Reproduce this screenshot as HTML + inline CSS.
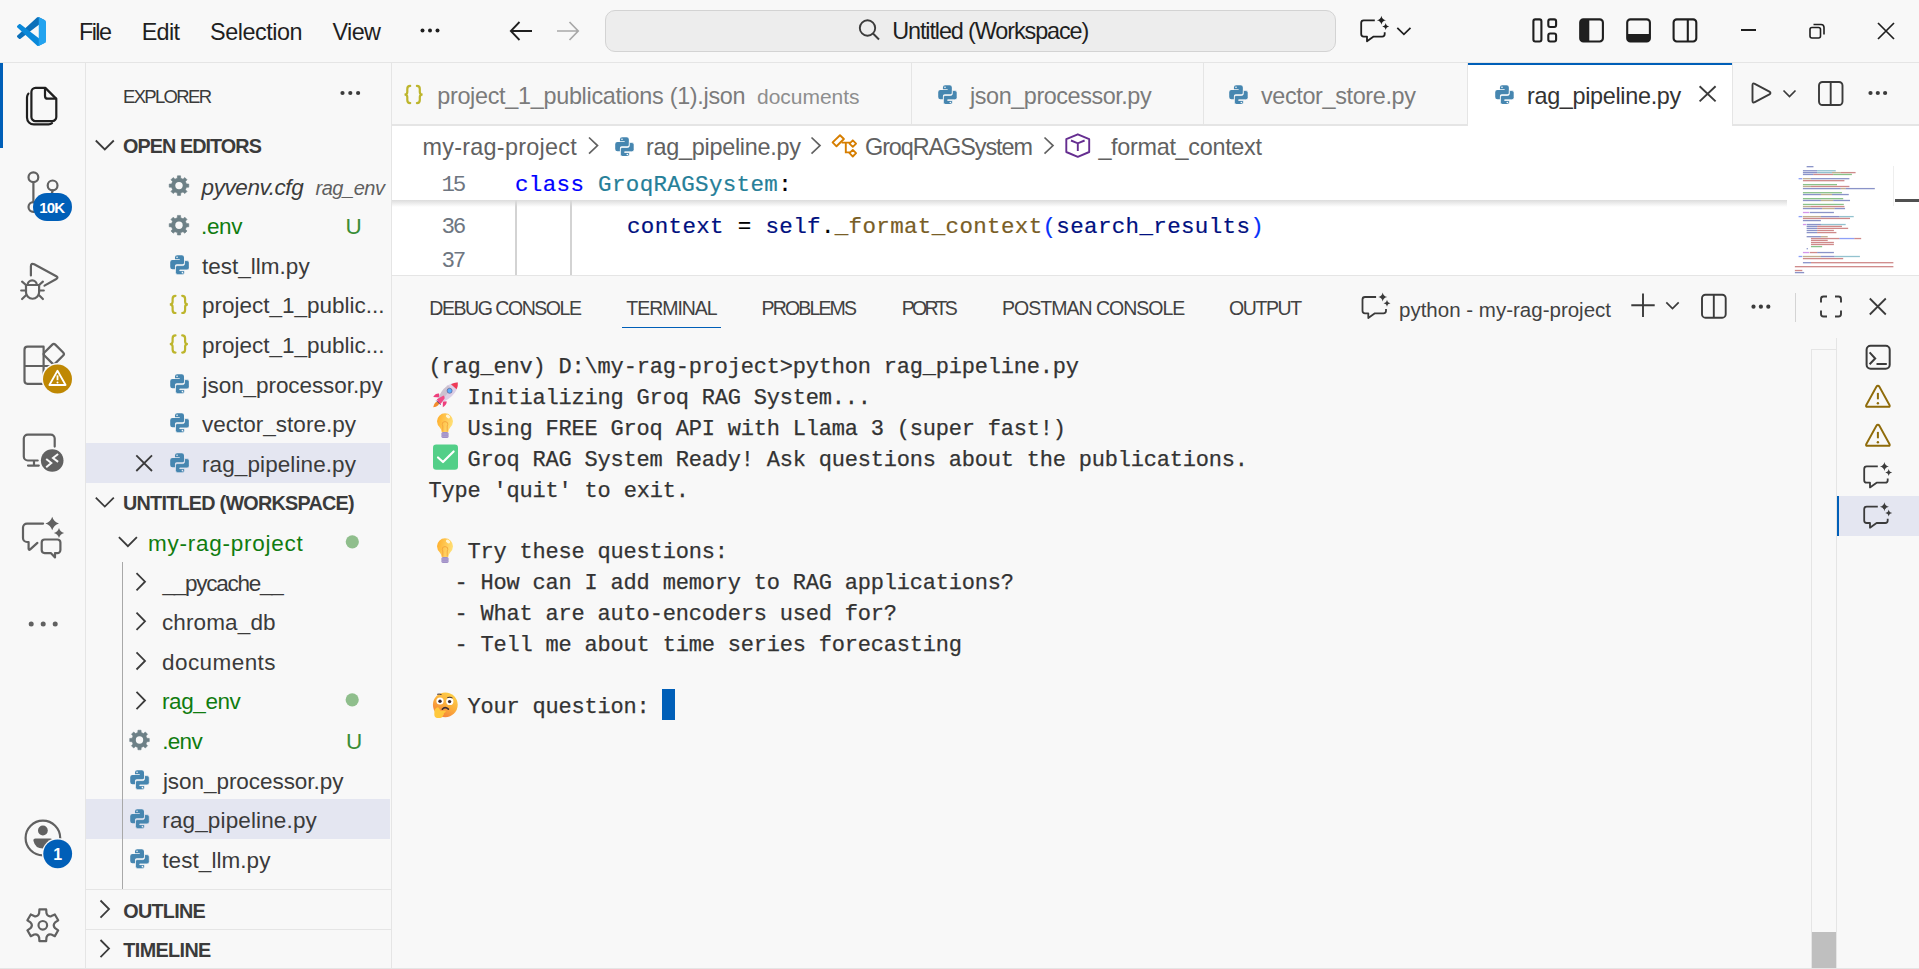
<!DOCTYPE html>
<html><head><meta charset="utf-8"><title>VS Code</title>
<style>
html,body{margin:0;padding:0;width:1919px;height:969px;overflow:hidden;background:#f8f8f8;}
body{position:relative;font-family:"Liberation Sans",sans-serif;}
.t{position:absolute;white-space:nowrap;line-height:1;}
.r{position:absolute;display:block;}
</style></head><body>
<div class="r" style="left:0px;top:0px;width:1919px;height:969px;background:#f8f8f8;"></div><div class="r" style="left:0px;top:62px;width:1919px;height:1px;background:#e5e5e5;"></div><div class="r" style="left:85px;top:63px;width:1px;height:906px;background:#e5e5e5;"></div><div class="r" style="left:391px;top:63px;width:1px;height:906px;background:#e5e5e5;"></div><div class="r" style="left:0px;top:63px;width:3px;height:85px;background:#005fb8;"></div><div class="r" style="left:392px;top:125px;width:1527px;height:150px;background:#ffffff;"></div><div class="r" style="left:392px;top:125px;width:1076px;height:1px;background:#e5e5e5;"></div><div class="r" style="left:1732px;top:125px;width:187px;height:1px;background:#e5e5e5;"></div><div class="r" style="left:392px;top:275px;width:1527px;height:1px;background:#e5e5e5;"></div><div class="r" style="left:0px;top:968px;width:1919px;height:1px;background:#e5e5e5;"></div><svg class="r" style="left:17px;top:17px;" width="29" height="29" viewBox="0 0 100 100"><path fill="#0b6fb9" d="M96.46 10.8L75.86.87C73.48-.28 70.64.2 68.76 2.07L1.34 63.55C-.48 65.2-.48 68.08 1.34 69.74L6.85 74.75C8.34 76.1 10.57 76.2 12.16 74.99L93.42 13.35C96.14 11.28 100 13.22 100 16.64V16.4C100 14 98.63 11.84 96.46 10.8Z"/><path fill="#0a88d9" d="M96.46 89.2L75.86 99.13C73.48 100.28 70.64 99.8 68.76 97.93L1.34 36.45C-.48 34.8-.48 31.92 1.34 30.26L6.85 25.25C8.34 23.9 10.57 23.8 12.16 25.01L93.42 86.65C96.14 88.72 100 86.78 100 83.36V83.6C100 86 98.63 88.16 96.46 89.2Z"/><path fill="#23a3ef" d="M75.86 99.13C73.48 100.28 70.64 99.8 68.76 97.93 71.07 100.24 75 98.6 75 95.34V4.66C75 1.4 71.07-.24 68.76 2.07 70.64.2 73.48-.28 75.86.87L96.46 10.79C98.63 11.83 100 14.02 100 16.43V83.57C100 85.98 98.63 88.17 96.46 89.21Z"/></svg><div class="t" style="left:79.00px;top:21.00px;font-size:23.4px;color:#1f1f1f;letter-spacing:-1.583px;">File</div><div class="t" style="left:141.70px;top:21.00px;font-size:23.4px;color:#1f1f1f;letter-spacing:-0.692px;">Edit</div><div class="t" style="left:210.00px;top:21.00px;font-size:23.4px;color:#1f1f1f;letter-spacing:-0.456px;">Selection</div><div class="t" style="left:332.60px;top:21.00px;font-size:23.4px;color:#1f1f1f;letter-spacing:-0.658px;">View</div><svg class="r" style="left:418px;top:24px;" width="24" height="13" viewBox="0 0 24 13"><circle cx="4.5" cy="6.5" r="2" fill="#1f1f1f"/><circle cx="12" cy="6.5" r="2" fill="#1f1f1f"/><circle cx="19.5" cy="6.5" r="2" fill="#1f1f1f"/></svg><svg class="r" style="left:505px;top:18px;" width="32" height="26" viewBox="0 0 32 26"><path d="M27 13H5.8M14.5 4L5.8 13 14.5 22" fill="none" stroke="#1f1f1f" stroke-width="1.8"/></svg><svg class="r" style="left:552px;top:18px;" width="32" height="26" viewBox="0 0 32 26"><path d="M5 13H26.2M17.5 4L26.2 13 17.5 22" fill="none" stroke="#a8a8a8" stroke-width="1.7"/></svg><div class="r" style="left:605px;top:10px;width:731px;height:42px;background:#ededed;border:1px solid #d3d3d3;border-radius:10px;box-sizing:border-box;"></div><svg class="r" style="left:856px;top:18px;" width="26" height="24" viewBox="0 0 26 24"><circle cx="11.5" cy="10" r="7.7" fill="none" stroke="#3b3b3b" stroke-width="1.9"/><path d="M17 15.5L23 21.5" stroke="#3b3b3b" stroke-width="2"/></svg><div class="t" style="left:892.20px;top:20.00px;font-size:23.4px;color:#1f1f1f;letter-spacing:-1.100px;">Untitled (Workspace)</div><svg class="r" style="left:1357px;top:12px;" width="36" height="34" viewBox="1357 12 36 34"><path d="M1374.8 20.3H1363.7Q1361.2 20.3 1361.2 22.8V34.1Q1361.2 36.6 1363.7 36.6H1367.0V41.3L1373.6000000000001 36.6H1382.2Q1384.7 36.6 1384.7 34.1V32.3" fill="none" stroke="#1f1f1f" stroke-width="1.8" stroke-linejoin="round"/><path d="M1381.4 15.8Q1382.0300000000002 19.67 1385.9 20.3Q1382.0300000000002 20.93 1381.4 24.8Q1380.77 20.93 1376.9 20.3Q1380.77 19.67 1381.4 15.8Z" fill="#1f1f1f"/><path d="M1385.7 23.0Q1386.19 26.01 1389.2 26.5Q1386.19 26.99 1385.7 30.0Q1385.21 26.99 1382.2 26.5Q1385.21 26.01 1385.7 23.0Z" fill="#1f1f1f"/></svg><svg class="r" style="left:1393px;top:24px;" width="20" height="14" viewBox="1393 24 20 14"><path d="M1397.3 27.8L1403.9 34.4 1410.5 27.8" fill="none" stroke="#1f1f1f" stroke-width="1.7"/></svg><svg class="r" style="left:1526px;top:14px;" width="180" height="34" viewBox="1526 14 180 34"><rect x="1533.4" y="19.35" width="8" height="22.1" rx="1.9" fill="none" stroke="#1f1f1f" stroke-width="2.1"/><rect x="1548.3" y="19.35" width="7.8" height="7.6" rx="1.9" fill="none" stroke="#1f1f1f" stroke-width="2.1"/><rect x="1548.3" y="33.5" width="7.8" height="7.95" rx="1.9" fill="none" stroke="#1f1f1f" stroke-width="2.1"/><rect x="1580.2" y="19.35" width="22.7" height="22.1" rx="3.2" fill="none" stroke="#1f1f1f" stroke-width="2.1"/><path d="M1580.2 22.5A3.2 3.2 0 0 1 1583.4 19.35H1589.3V41.45H1583.4A3.2 3.2 0 0 1 1580.2 38.3Z" fill="#1f1f1f"/><rect x="1627.2" y="19.35" width="22.7" height="22.1" rx="3.2" fill="none" stroke="#1f1f1f" stroke-width="2.1"/><path d="M1627.2 34H1649.9V38.3A3.2 3.2 0 0 1 1646.7 41.45H1630.4A3.2 3.2 0 0 1 1627.2 38.3Z" fill="#1f1f1f"/><rect x="1673.6" y="19.35" width="22.7" height="22.1" rx="3.2" fill="none" stroke="#1f1f1f" stroke-width="2.1"/><path d="M1687.8 19.35V41.45" stroke="#1f1f1f" stroke-width="2.1"/></svg><div class="r" style="left:1741px;top:29px;width:15px;height:2px;background:#1f1f1f;"></div><svg class="r" style="left:1806px;top:20px;" width="22" height="22" viewBox="0 0 22 22"><rect x="4" y="7.5" width="10.5" height="10.5" rx="2" fill="none" stroke="#1f1f1f" stroke-width="1.6"/><path d="M7.5 4.5H15A3 3 0 0 1 18 7.5V14.5" fill="none" stroke="#1f1f1f" stroke-width="1.6"/></svg><svg class="r" style="left:1874px;top:19px;" width="24" height="24" viewBox="0 0 24 24"><path d="M4 4L20 20M20 4L4 20" stroke="#1f1f1f" stroke-width="1.7"/></svg><svg class="r" style="left:20px;top:80px;" width="46" height="52" viewBox="20 80 46 52"><path d="M35.6 87.9H45.3L56.3 98.9V116.9A4.2 4.2 0 0 1 52.1 121.1H35.6A4.2 4.2 0 0 1 31.4 116.9V92.1A4.2 4.2 0 0 1 35.6 87.9Z" stroke="#1f1f1f" stroke-width="2.2" fill="none" stroke-linejoin="round" stroke-linecap="round"/><path d="M45 88.2V95.9A2.8 2.8 0 0 0 47.8 98.7H56" stroke="#1f1f1f" stroke-width="2.2" fill="none" stroke-linejoin="round" stroke-linecap="round"/><path d="M28.4 93.6Q27 95.2 27 97.6V117.6A6.8 6.8 0 0 0 33.8 124.4H48.6Q50.6 124.4 52 123.2" stroke="#1f1f1f" stroke-width="2.2" fill="none" stroke-linejoin="round" stroke-linecap="round"/></svg><svg class="r" style="left:20px;top:160px;" width="50" height="60" viewBox="20 160 50 60"><circle cx="33.4" cy="177.3" r="4.9" stroke="#616161" stroke-width="2.2" fill="none" stroke-linejoin="round" stroke-linecap="round"/><circle cx="52.6" cy="185.4" r="4.9" stroke="#616161" stroke-width="2.2" fill="none" stroke-linejoin="round" stroke-linecap="round"/><circle cx="33.4" cy="207" r="4.9" stroke="#616161" stroke-width="2.2" fill="none" stroke-linejoin="round" stroke-linecap="round"/><path d="M33.4 182.2V202.1M52.6 190.3Q52.6 198 38 202.5" stroke="#616161" stroke-width="2.2" fill="none" stroke-linejoin="round" stroke-linecap="round"/></svg><div class="r" style="left:33px;top:192.5px;width:39px;height:28.5px;background:#005fb8;border-radius:14.25px;"></div><div class="t" style="left:39.30px;top:200.00px;font-size:15px;color:#ffffff;letter-spacing:-0.900px;font-weight:700;">10K</div><svg class="r" style="left:15px;top:255px;" width="50" height="50" viewBox="15 255 50 50"><path d="M30.9 275.4V266.3Q31 262.8 34.2 264.3L56.3 276.2Q58.6 277.6 56.3 279L44.5 285.6" stroke="#616161" stroke-width="2.2" fill="none" stroke-linejoin="round" stroke-linecap="round"/><path d="M27.6 285A4.6 4.6 0 0 1 36.8 285" stroke="#616161" stroke-width="2.2" fill="none" stroke-linejoin="round" stroke-linecap="round"/><path d="M26 285H39.1V292.2A6.55 6.55 0 0 1 26 292.2Z" stroke="#616161" stroke-width="2.2" fill="none" stroke-linejoin="round" stroke-linecap="round"/><path d="M22.1 281.7L26 285M21.2 290.5H26M22.1 299L26 295.3M42.9 281.7L39.1 285M43.8 290.5H39.1M42.9 299L39.1 295.3" stroke="#616161" stroke-width="2.2" fill="none" stroke-linejoin="round" stroke-linecap="round"/></svg><svg class="r" style="left:15px;top:338px;" width="60" height="55" viewBox="15 338 60 55"><path d="M43.6 346.7H27.5A3 3 0 0 0 24.5 349.7V380.8A3 3 0 0 0 27.5 383.8H58.6A3 3 0 0 0 61.6 380.8V366H24.5M43.6 346.7V383.8" stroke="#616161" stroke-width="2.2" fill="none" stroke-linejoin="round" stroke-linecap="round"/><path d="M52.3 344.6Q53.8 343.1 55.3 344.6L63.2 352.5Q64.7 354 63.2 355.5L55.3 363.4Q53.8 364.9 52.3 363.4L44.4 355.5Q42.9 354 44.4 352.5Z" stroke="#616161" stroke-width="2.2" fill="none" stroke-linejoin="round" stroke-linecap="round"/></svg><svg class="r" style="left:40px;top:361px;" width="36" height="36" viewBox="40 361 36 36"><circle cx="57.5" cy="379" r="16" fill="#f8f8f8"/><circle cx="57.5" cy="379" r="14.5" fill="#bf8803"/><path d="M57.5 370.8L65.6 385H49.4Z" fill="none" stroke="#ffffff" stroke-width="1.8" stroke-linejoin="round"/><path d="M57.5 375.3V380.2" stroke="#ffffff" stroke-width="1.8"/><circle cx="57.5" cy="382.6" r="1" fill="#fff"/></svg><svg class="r" style="left:15px;top:425px;" width="55" height="50" viewBox="15 425 55 50"><path d="M37.7 460.5H27.8A4 4 0 0 1 23.8 456.5V438.6A4 4 0 0 1 27.8 434.6H50.7A4 4 0 0 1 54.7 438.6V446.6M34 460.5V465.6M28 465.6H38.8" stroke="#616161" stroke-width="2.2" fill="none" stroke-linejoin="round" stroke-linecap="round"/><circle cx="52.2" cy="460.5" r="12.6" fill="#f8f8f8"/><circle cx="52.2" cy="460.5" r="11.3" fill="#616161"/><path d="M46.2 459L51.3 463 46.2 467.3M58.1 454L53 458 58.1 461.9" fill="none" stroke="#f8f8f8" stroke-width="2"/></svg><svg class="r" style="left:15px;top:510px;" width="55" height="55" viewBox="15 510 55 55"><path d="M43.1 523.6H27A4 4 0 0 0 23 527.6V538A4 4 0 0 0 27 542H28.6V548.7Q28.8 550.5 30.2 549.4L37.4 542.9" stroke="#616161" stroke-width="2.2" fill="none" stroke-linejoin="round" stroke-linecap="round"/><path d="M44.7 539.5H57.4A3 3 0 0 1 60.4 542.5V550.1A3 3 0 0 1 57.4 553.1H55V557.5L50.8 553.1H44.7A3 3 0 0 1 41.7 550.1V542.5A3 3 0 0 1 44.7 539.5Z" stroke="#616161" stroke-width="2.2" fill="none" stroke-linejoin="round" stroke-linecap="round"/><path d="M52.2 516.7Q53.696000000000005 522.004 59.0 523.5Q53.696000000000005 524.996 52.2 530.3Q50.704 524.996 45.400000000000006 523.5Q50.704 522.004 52.2 516.7Z" fill="#616161"/><path d="M59 527.9Q60.122 531.878 64.1 533Q60.122 534.122 59 538.1Q57.878 534.122 53.9 533Q57.878 531.878 59 527.9Z" fill="#616161"/></svg><svg class="r" style="left:25px;top:615px;" width="36" height="18" viewBox="25 615 36 18"><circle cx="31.2" cy="624" r="2.5" fill="#616161"/><circle cx="43.2" cy="624" r="2.5" fill="#616161"/><circle cx="55.2" cy="624" r="2.5" fill="#616161"/></svg><svg class="r" style="left:15px;top:812px;" width="60" height="60" viewBox="15 812 60 60"><circle cx="42.9" cy="838" r="17.3" stroke="#616161" stroke-width="2.2" fill="none" stroke-linejoin="round" stroke-linecap="round"/><circle cx="42.9" cy="830.5" r="4.9" fill="#616161"/><path d="M35.5 838.5H50.3Q52.9 838.5 52.3 841Q50.6 848.6 42.9 848.6Q35.2 848.6 33.5 841Q32.9 838.5 35.5 838.5Z" fill="#616161"/><circle cx="57.7" cy="853.8" r="15.8" fill="#f8f8f8"/><circle cx="57.7" cy="853.8" r="14.4" fill="#005fb8"/></svg><div class="t" style="left:53.20px;top:847.00px;font-size:16px;color:#ffffff;font-weight:700;">1</div><svg class="r" style="left:15px;top:898px;" width="56" height="56" viewBox="15 898 56 56"><path d="M39.12 913.25L39.43 909.45L46.17 909.45L46.48 913.25Q47.60 916.99 51.39 916.08L54.84 914.46L58.21 920.29L55.08 922.47Q52.40 925.30 55.08 928.13L58.21 930.31L54.84 936.14L51.39 934.52Q47.60 933.61 46.48 937.35L46.17 941.15L39.43 941.15L39.12 937.35Q38.00 933.61 34.21 934.52L30.76 936.14L27.39 930.31L30.52 928.13Q33.20 925.30 30.52 922.47L27.39 920.29L30.76 914.46L34.21 916.08Q38.00 916.99 39.12 913.25Z" stroke="#616161" stroke-width="2.2" fill="none" stroke-linejoin="round" stroke-linecap="round"/><circle cx="42.8" cy="925.3" r="4.3" stroke="#616161" stroke-width="2.2" fill="none" stroke-linejoin="round" stroke-linecap="round"/></svg><div class="t" style="left:123.00px;top:88.00px;font-size:18.5px;color:#3b3b3b;letter-spacing:-1.679px;">EXPLORER</div><svg class="r" style="left:336px;top:86px;" width="28" height="14" viewBox="336 86 28 14"><circle cx="342.5" cy="93" r="2.1" fill="#3b3b3b"/><circle cx="350.3" cy="93" r="2.1" fill="#3b3b3b"/><circle cx="358.1" cy="93" r="2.1" fill="#3b3b3b"/></svg><svg class="r" style="left:93px;top:138px;" width="24" height="16" viewBox="93 138 24 16"><path d="M95.8 140.5L104.8 149.5L113.8 140.5" fill="none" stroke="#3b3b3b" stroke-width="1.8"/></svg><div class="t" style="left:123.00px;top:137.00px;font-size:19.8px;color:#3b3b3b;letter-spacing:-0.932px;font-weight:700;">OPEN EDITORS</div><svg class="r" style="left:167px;top:173px;" width="24" height="24" viewBox="167 173 24 24"><path d="M177.29 178.19L177.45 175.82L180.55 175.82L180.71 178.19L183.03 179.15L184.82 177.59L187.01 179.78L185.45 181.57L186.41 183.89L188.78 184.05L188.78 187.15L186.41 187.31L185.45 189.63L187.01 191.42L184.82 193.61L183.03 192.05L180.71 193.01L180.55 195.38L177.45 195.38L177.29 193.01L174.97 192.05L173.18 193.61L170.99 191.42L172.55 189.63L171.59 187.31L169.22 187.15L169.22 184.05L171.59 183.89L172.55 181.57L170.99 179.78L173.18 177.59L174.97 179.15Z" fill="#6d8086" stroke="#6d8086" stroke-width="0.6" stroke-linejoin="round"/><circle cx="179" cy="185.60000000000002" r="3.7" fill="#f8f8f8"/></svg><div class="t" style="left:201.62px;top:177.00px;font-size:22.5px;color:#3b3b3b;letter-spacing:-0.422px;font-style:italic;">pyvenv.cfg</div><div class="t" style="left:315.50px;top:178.00px;font-size:20px;color:#5f5f5f;letter-spacing:-0.458px;font-style:italic;">rag_env</div><svg class="r" style="left:167px;top:213px;" width="24" height="24" viewBox="167 213 24 24"><path d="M177.29 217.79L177.45 215.42L180.55 215.42L180.71 217.79L183.03 218.75L184.82 217.19L187.01 219.38L185.45 221.17L186.41 223.49L188.78 223.65L188.78 226.75L186.41 226.91L185.45 229.23L187.01 231.02L184.82 233.21L183.03 231.65L180.71 232.61L180.55 234.98L177.45 234.98L177.29 232.61L174.97 231.65L173.18 233.21L170.99 231.02L172.55 229.23L171.59 226.91L169.22 226.75L169.22 223.65L171.59 223.49L172.55 221.17L170.99 219.38L173.18 217.19L174.97 218.75Z" fill="#6d8086" stroke="#6d8086" stroke-width="0.6" stroke-linejoin="round"/><circle cx="179" cy="225.20000000000002" r="3.7" fill="#f8f8f8"/></svg><div class="t" style="left:201.00px;top:216.00px;font-size:22.5px;color:#107c10;letter-spacing:-0.333px;">.env</div><div class="t" style="left:345.50px;top:216.00px;font-size:22.5px;color:#3a8d36;">U</div><svg class="r" style="left:169.8px;top:255.0px;" width="19.5" height="19.923913043478265" viewBox="-0.2 -0.2 18.8 19.2"><path fill="#4686b0" d="M4.6 2.2Q4.6 0 6.8 0H11.1Q13.3 0 13.3 2.2V7.3Q13.3 8.8 11.8 8.8H6.3Q4.6 8.8 4.6 10.5V13.6H2.2Q0 13.6 0 11.4V6.8Q0 4.6 2.2 4.6H9.2V3.9H4.6Z"/><path fill="#4686b0" stroke="#f8f8f8" stroke-width="0.7" d="M13.8 16.6Q13.8 18.8 11.6 18.8H7.3Q5.1 18.8 5.1 16.6V11.5Q5.1 10 6.6 10H12.1Q13.8 10 13.8 8.3V5.2H16.2Q18.4 5.2 18.4 7.4V12Q18.4 14.2 16.2 14.2H9.2V14.9H13.8Z"/><circle cx="6.6" cy="2" r="0.8" fill="#f8f8f8"/><circle cx="11.8" cy="16.8" r="0.8" fill="#f8f8f8"/></svg><div class="t" style="left:202.00px;top:256.00px;font-size:22.5px;color:#3b3b3b;letter-spacing:0.010px;">test_llm.py</div><svg class="r" style="left:167px;top:292px;" width="26" height="24" viewBox="167 292 26 24"><path d="M175.5 295.8Q172.60000000000002 295.8 172.60000000000002 298.90000000000003V301.8Q172.60000000000002 304.40000000000003 169.8 304.40000000000003Q172.60000000000002 304.40000000000003 172.60000000000002 307.00000000000006V309.90000000000003Q172.60000000000002 313.00000000000006 175.5 313.00000000000006M182.20000000000002 295.8Q185.10000000000002 295.8 185.10000000000002 298.90000000000003V301.8Q185.10000000000002 304.40000000000003 187.9 304.40000000000003Q185.10000000000002 304.40000000000003 185.10000000000002 307.00000000000006V309.90000000000003Q185.10000000000002 313.00000000000006 182.20000000000002 313.00000000000006" fill="none" stroke="#bdb52c" stroke-width="2.2" stroke-linecap="round"/></svg><div class="t" style="left:202.00px;top:295.00px;font-size:22.5px;color:#3b3b3b;letter-spacing:-0.001px;">project_1_public...</div><svg class="r" style="left:167px;top:332px;" width="26" height="24" viewBox="167 332 26 24"><path d="M175.5 335.40000000000003Q172.60000000000002 335.40000000000003 172.60000000000002 338.50000000000006V341.40000000000003Q172.60000000000002 344.00000000000006 169.8 344.00000000000006Q172.60000000000002 344.00000000000006 172.60000000000002 346.6000000000001V349.50000000000006Q172.60000000000002 352.6000000000001 175.5 352.6000000000001M182.20000000000002 335.40000000000003Q185.10000000000002 335.40000000000003 185.10000000000002 338.50000000000006V341.40000000000003Q185.10000000000002 344.00000000000006 187.9 344.00000000000006Q185.10000000000002 344.00000000000006 185.10000000000002 346.6000000000001V349.50000000000006Q185.10000000000002 352.6000000000001 182.20000000000002 352.6000000000001" fill="none" stroke="#bdb52c" stroke-width="2.2" stroke-linecap="round"/></svg><div class="t" style="left:202.00px;top:335.00px;font-size:22.5px;color:#3b3b3b;letter-spacing:-0.001px;">project_1_public...</div><svg class="r" style="left:169.8px;top:373.8px;" width="19.5" height="19.923913043478265" viewBox="-0.2 -0.2 18.8 19.2"><path fill="#4686b0" d="M4.6 2.2Q4.6 0 6.8 0H11.1Q13.3 0 13.3 2.2V7.3Q13.3 8.8 11.8 8.8H6.3Q4.6 8.8 4.6 10.5V13.6H2.2Q0 13.6 0 11.4V6.8Q0 4.6 2.2 4.6H9.2V3.9H4.6Z"/><path fill="#4686b0" stroke="#f8f8f8" stroke-width="0.7" d="M13.8 16.6Q13.8 18.8 11.6 18.8H7.3Q5.1 18.8 5.1 16.6V11.5Q5.1 10 6.6 10H12.1Q13.8 10 13.8 8.3V5.2H16.2Q18.4 5.2 18.4 7.4V12Q18.4 14.2 16.2 14.2H9.2V14.9H13.8Z"/><circle cx="6.6" cy="2" r="0.8" fill="#f8f8f8"/><circle cx="11.8" cy="16.8" r="0.8" fill="#f8f8f8"/></svg><div class="t" style="left:202.62px;top:375.00px;font-size:22.5px;color:#3b3b3b;letter-spacing:-0.075px;">json_processor.py</div><svg class="r" style="left:169.8px;top:413.40000000000003px;" width="19.5" height="19.923913043478265" viewBox="-0.2 -0.2 18.8 19.2"><path fill="#4686b0" d="M4.6 2.2Q4.6 0 6.8 0H11.1Q13.3 0 13.3 2.2V7.3Q13.3 8.8 11.8 8.8H6.3Q4.6 8.8 4.6 10.5V13.6H2.2Q0 13.6 0 11.4V6.8Q0 4.6 2.2 4.6H9.2V3.9H4.6Z"/><path fill="#4686b0" stroke="#f8f8f8" stroke-width="0.7" d="M13.8 16.6Q13.8 18.8 11.6 18.8H7.3Q5.1 18.8 5.1 16.6V11.5Q5.1 10 6.6 10H12.1Q13.8 10 13.8 8.3V5.2H16.2Q18.4 5.2 18.4 7.4V12Q18.4 14.2 16.2 14.2H9.2V14.9H13.8Z"/><circle cx="6.6" cy="2" r="0.8" fill="#f8f8f8"/><circle cx="11.8" cy="16.8" r="0.8" fill="#f8f8f8"/></svg><div class="t" style="left:202.00px;top:414.00px;font-size:22.5px;color:#3b3b3b;letter-spacing:0.009px;">vector_store.py</div><div class="r" style="left:86px;top:443px;width:304px;height:40px;background:#e4e6f1;"></div><svg class="r" style="left:130px;top:450px;" width="28" height="28" viewBox="130 450 28 28"><path d="M136.3 455.3L152 471M152 455.3L136.3 471" stroke="#3b3b3b" stroke-width="1.8"/></svg><svg class="r" style="left:169.8px;top:453.0px;" width="19.5" height="19.923913043478265" viewBox="-0.2 -0.2 18.8 19.2"><path fill="#4686b0" d="M4.6 2.2Q4.6 0 6.8 0H11.1Q13.3 0 13.3 2.2V7.3Q13.3 8.8 11.8 8.8H6.3Q4.6 8.8 4.6 10.5V13.6H2.2Q0 13.6 0 11.4V6.8Q0 4.6 2.2 4.6H9.2V3.9H4.6Z"/><path fill="#4686b0" stroke="#e4e6f1" stroke-width="0.7" d="M13.8 16.6Q13.8 18.8 11.6 18.8H7.3Q5.1 18.8 5.1 16.6V11.5Q5.1 10 6.6 10H12.1Q13.8 10 13.8 8.3V5.2H16.2Q18.4 5.2 18.4 7.4V12Q18.4 14.2 16.2 14.2H9.2V14.9H13.8Z"/><circle cx="6.6" cy="2" r="0.8" fill="#e4e6f1"/><circle cx="11.8" cy="16.8" r="0.8" fill="#e4e6f1"/></svg><div class="t" style="left:202.00px;top:454.00px;font-size:22.5px;color:#3b3b3b;letter-spacing:0.098px;">rag_pipeline.py</div><svg class="r" style="left:93px;top:495px;" width="24" height="16" viewBox="93 495 24 16"><path d="M95.8 497.6L104.8 506.6L113.8 497.6" fill="none" stroke="#3b3b3b" stroke-width="1.8"/></svg><div class="t" style="left:123.00px;top:494.00px;font-size:19.8px;color:#3b3b3b;letter-spacing:-0.747px;font-weight:700;">UNTITLED (WORKSPACE)</div><svg class="r" style="left:116px;top:535px;" width="24" height="16" viewBox="116 535 24 16"><path d="M118.9 537.2L127.9 546.2L136.9 537.2" fill="none" stroke="#3b3b3b" stroke-width="1.8"/></svg><div class="t" style="left:148.00px;top:533.00px;font-size:22.5px;color:#107c10;letter-spacing:0.754px;">my-rag-project</div><svg class="r" style="left:340px;top:530px;" width="24" height="24" viewBox="340 530 24 24"><circle cx="352.3" cy="541.8" r="6.6" fill="#8fbe8c"/></svg><div class="r" style="left:122px;top:562px;width:1px;height:327px;background:#a8a8a8;"></div><svg class="r" style="left:134px;top:571px;" width="16" height="24" viewBox="134 571 16 24"><path d="M136.5 573.0999999999999L145.0 581.6999999999999L136.5 590.3" fill="none" stroke="#3b3b3b" stroke-width="1.8"/></svg><div class="t" style="left:162.38px;top:573.00px;font-size:22.5px;color:#3b3b3b;letter-spacing:-1.242px;">__pycache__</div><svg class="r" style="left:134px;top:610px;" width="16" height="24" viewBox="134 610 16 24"><path d="M136.5 612.7L145.0 621.3000000000001L136.5 629.9000000000001" fill="none" stroke="#3b3b3b" stroke-width="1.8"/></svg><div class="t" style="left:162.00px;top:612.00px;font-size:22.5px;color:#3b3b3b;letter-spacing:0.122px;">chroma_db</div><svg class="r" style="left:134px;top:650px;" width="16" height="24" viewBox="134 650 16 24"><path d="M136.5 652.3L145.0 660.9L136.5 669.5" fill="none" stroke="#3b3b3b" stroke-width="1.8"/></svg><div class="t" style="left:162.00px;top:652.00px;font-size:22.5px;color:#3b3b3b;letter-spacing:0.434px;">documents</div><svg class="r" style="left:134px;top:689px;" width="16" height="24" viewBox="134 689 16 24"><path d="M136.5 691.9000000000001L145.0 700.5000000000001L136.5 709.1000000000001" fill="none" stroke="#3b3b3b" stroke-width="1.8"/></svg><div class="t" style="left:162.00px;top:691.00px;font-size:22.5px;color:#107c10;letter-spacing:-0.408px;">rag_env</div><svg class="r" style="left:340px;top:688px;" width="24" height="24" viewBox="340 688 24 24"><circle cx="352.2" cy="699.8" r="6.6" fill="#8fbe8c"/></svg><svg class="r" style="left:127px;top:728px;" width="24" height="24" viewBox="127 728 24 24"><path d="M137.79 732.59L137.95 730.22L141.05 730.22L141.21 732.59L143.53 733.55L145.32 731.99L147.51 734.18L145.95 735.97L146.91 738.29L149.28 738.45L149.28 741.55L146.91 741.71L145.95 744.03L147.51 745.82L145.32 748.01L143.53 746.45L141.21 747.41L141.05 749.78L137.95 749.78L137.79 747.41L135.47 746.45L133.68 748.01L131.49 745.82L133.05 744.03L132.09 741.71L129.72 741.55L129.72 738.45L132.09 738.29L133.05 735.97L131.49 734.18L133.68 731.99L135.47 733.55Z" fill="#6d8086" stroke="#6d8086" stroke-width="0.6" stroke-linejoin="round"/><circle cx="139.5" cy="740.0" r="3.7" fill="#f8f8f8"/></svg><div class="t" style="left:162.30px;top:731.00px;font-size:22.5px;color:#107c10;letter-spacing:-0.733px;">.env</div><div class="t" style="left:346.00px;top:731.00px;font-size:22.5px;color:#3a8d36;">U</div><svg class="r" style="left:130.2px;top:769.8px;" width="19.5" height="19.923913043478265" viewBox="-0.2 -0.2 18.8 19.2"><path fill="#4686b0" d="M4.6 2.2Q4.6 0 6.8 0H11.1Q13.3 0 13.3 2.2V7.3Q13.3 8.8 11.8 8.8H6.3Q4.6 8.8 4.6 10.5V13.6H2.2Q0 13.6 0 11.4V6.8Q0 4.6 2.2 4.6H9.2V3.9H4.6Z"/><path fill="#4686b0" stroke="#f8f8f8" stroke-width="0.7" d="M13.8 16.6Q13.8 18.8 11.6 18.8H7.3Q5.1 18.8 5.1 16.6V11.5Q5.1 10 6.6 10H12.1Q13.8 10 13.8 8.3V5.2H16.2Q18.4 5.2 18.4 7.4V12Q18.4 14.2 16.2 14.2H9.2V14.9H13.8Z"/><circle cx="6.6" cy="2" r="0.8" fill="#f8f8f8"/><circle cx="11.8" cy="16.8" r="0.8" fill="#f8f8f8"/></svg><div class="t" style="left:162.93px;top:771.00px;font-size:22.5px;color:#3b3b3b;letter-spacing:-0.056px;">json_processor.py</div><div class="r" style="left:86px;top:799px;width:304px;height:40px;background:#e4e6f1;"></div><div class="r" style="left:122px;top:799px;width:1px;height:40px;background:#a8a8a8;"></div><svg class="r" style="left:130.2px;top:809.4000000000001px;" width="19.5" height="19.923913043478265" viewBox="-0.2 -0.2 18.8 19.2"><path fill="#4686b0" d="M4.6 2.2Q4.6 0 6.8 0H11.1Q13.3 0 13.3 2.2V7.3Q13.3 8.8 11.8 8.8H6.3Q4.6 8.8 4.6 10.5V13.6H2.2Q0 13.6 0 11.4V6.8Q0 4.6 2.2 4.6H9.2V3.9H4.6Z"/><path fill="#4686b0" stroke="#e4e6f1" stroke-width="0.7" d="M13.8 16.6Q13.8 18.8 11.6 18.8H7.3Q5.1 18.8 5.1 16.6V11.5Q5.1 10 6.6 10H12.1Q13.8 10 13.8 8.3V5.2H16.2Q18.4 5.2 18.4 7.4V12Q18.4 14.2 16.2 14.2H9.2V14.9H13.8Z"/><circle cx="6.6" cy="2" r="0.8" fill="#e4e6f1"/><circle cx="11.8" cy="16.8" r="0.8" fill="#e4e6f1"/></svg><div class="t" style="left:162.30px;top:810.00px;font-size:22.5px;color:#3b3b3b;letter-spacing:0.134px;">rag_pipeline.py</div><svg class="r" style="left:130.2px;top:849.0px;" width="19.5" height="19.923913043478265" viewBox="-0.2 -0.2 18.8 19.2"><path fill="#4686b0" d="M4.6 2.2Q4.6 0 6.8 0H11.1Q13.3 0 13.3 2.2V7.3Q13.3 8.8 11.8 8.8H6.3Q4.6 8.8 4.6 10.5V13.6H2.2Q0 13.6 0 11.4V6.8Q0 4.6 2.2 4.6H9.2V3.9H4.6Z"/><path fill="#4686b0" stroke="#f8f8f8" stroke-width="0.7" d="M13.8 16.6Q13.8 18.8 11.6 18.8H7.3Q5.1 18.8 5.1 16.6V11.5Q5.1 10 6.6 10H12.1Q13.8 10 13.8 8.3V5.2H16.2Q18.4 5.2 18.4 7.4V12Q18.4 14.2 16.2 14.2H9.2V14.9H13.8Z"/><circle cx="6.6" cy="2" r="0.8" fill="#f8f8f8"/><circle cx="11.8" cy="16.8" r="0.8" fill="#f8f8f8"/></svg><div class="t" style="left:162.30px;top:850.00px;font-size:22.5px;color:#3b3b3b;letter-spacing:0.060px;">test_llm.py</div><svg class="r" style="left:130.2px;top:888.6000000000001px;" width="19.5" height="19.923913043478265" viewBox="-0.2 -0.2 18.8 19.2"><path fill="#4686b0" d="M4.6 2.2Q4.6 0 6.8 0H11.1Q13.3 0 13.3 2.2V7.3Q13.3 8.8 11.8 8.8H6.3Q4.6 8.8 4.6 10.5V13.6H2.2Q0 13.6 0 11.4V6.8Q0 4.6 2.2 4.6H9.2V3.9H4.6Z"/><path fill="#4686b0" stroke="#f8f8f8" stroke-width="0.7" d="M13.8 16.6Q13.8 18.8 11.6 18.8H7.3Q5.1 18.8 5.1 16.6V11.5Q5.1 10 6.6 10H12.1Q13.8 10 13.8 8.3V5.2H16.2Q18.4 5.2 18.4 7.4V12Q18.4 14.2 16.2 14.2H9.2V14.9H13.8Z"/><circle cx="6.6" cy="2" r="0.8" fill="#f8f8f8"/><circle cx="11.8" cy="16.8" r="0.8" fill="#f8f8f8"/></svg><div class="r" style="left:86px;top:889px;width:305px;height:80px;background:#f8f8f8;"></div><div class="r" style="left:86px;top:889px;width:305px;height:1px;background:#e5e5e5;"></div><svg class="r" style="left:98px;top:898px;" width="16" height="24" viewBox="98 898 16 24"><path d="M100.5 900.5L109.0 909.1L100.5 917.7" fill="none" stroke="#3b3b3b" stroke-width="1.8"/></svg><div class="t" style="left:123.30px;top:902.00px;font-size:19.8px;color:#3b3b3b;letter-spacing:-0.729px;font-weight:700;">OUTLINE</div><div class="r" style="left:86px;top:929px;width:305px;height:1px;background:#e5e5e5;"></div><svg class="r" style="left:98px;top:938px;" width="16" height="24" viewBox="98 938 16 24"><path d="M100.5 940L109.0 948.6L100.5 957.2" fill="none" stroke="#3b3b3b" stroke-width="1.8"/></svg><div class="t" style="left:123.30px;top:941.00px;font-size:19.8px;color:#3b3b3b;letter-spacing:-0.625px;font-weight:700;">TIMELINE</div><div class="r" style="left:0px;top:968px;width:1919px;height:1px;background:#e5e5e5;"></div><div class="r" style="left:392px;top:63px;width:1527px;height:62px;background:#f8f8f8;"></div><div class="r" style="left:392px;top:124px;width:1076px;height:2px;background:#e5e5e5;"></div><div class="r" style="left:1732px;top:124px;width:187px;height:2px;background:#e5e5e5;"></div><svg class="r" style="left:402px;top:82px;" width="26" height="24" viewBox="402 82 26 24"><path d="M410.2 85.9Q407.3 85.9 407.3 89.0V91.9Q407.3 94.5 404.5 94.5Q407.3 94.5 407.3 97.1V100.0Q407.3 103.1 410.2 103.1M416.9 85.9Q419.8 85.9 419.8 89.0V91.9Q419.8 94.5 422.6 94.5Q419.8 94.5 419.8 97.1V100.0Q419.8 103.1 416.9 103.1" fill="none" stroke="#bdb52c" stroke-width="2.2" stroke-linecap="round"/></svg><div class="t" style="left:437.20px;top:85.00px;font-size:23.4px;color:#7b7b7b;letter-spacing:-0.296px;">project_1_publications (1).json</div><div class="t" style="left:757.00px;top:86.00px;font-size:21px;color:#8e8e8e;letter-spacing:-0.019px;">documents</div><div class="r" style="left:911px;top:63px;width:1px;height:62px;background:#e5e5e5;"></div><svg class="r" style="left:937.8px;top:84.5px;" width="19.3" height="19.719565217391306" viewBox="-0.2 -0.2 18.8 19.2"><path fill="#4686b0" d="M4.6 2.2Q4.6 0 6.8 0H11.1Q13.3 0 13.3 2.2V7.3Q13.3 8.8 11.8 8.8H6.3Q4.6 8.8 4.6 10.5V13.6H2.2Q0 13.6 0 11.4V6.8Q0 4.6 2.2 4.6H9.2V3.9H4.6Z"/><path fill="#4686b0" stroke="#f8f8f8" stroke-width="0.7" d="M13.8 16.6Q13.8 18.8 11.6 18.8H7.3Q5.1 18.8 5.1 16.6V11.5Q5.1 10 6.6 10H12.1Q13.8 10 13.8 8.3V5.2H16.2Q18.4 5.2 18.4 7.4V12Q18.4 14.2 16.2 14.2H9.2V14.9H13.8Z"/><circle cx="6.6" cy="2" r="0.8" fill="#f8f8f8"/><circle cx="11.8" cy="16.8" r="0.8" fill="#f8f8f8"/></svg><div class="t" style="left:970.12px;top:85.00px;font-size:23.4px;color:#7b7b7b;letter-spacing:-0.441px;">json_processor.py</div><div class="r" style="left:1203px;top:63px;width:1px;height:62px;background:#e5e5e5;"></div><svg class="r" style="left:1229px;top:84.5px;" width="19.3" height="19.719565217391306" viewBox="-0.2 -0.2 18.8 19.2"><path fill="#4686b0" d="M4.6 2.2Q4.6 0 6.8 0H11.1Q13.3 0 13.3 2.2V7.3Q13.3 8.8 11.8 8.8H6.3Q4.6 8.8 4.6 10.5V13.6H2.2Q0 13.6 0 11.4V6.8Q0 4.6 2.2 4.6H9.2V3.9H4.6Z"/><path fill="#4686b0" stroke="#f8f8f8" stroke-width="0.7" d="M13.8 16.6Q13.8 18.8 11.6 18.8H7.3Q5.1 18.8 5.1 16.6V11.5Q5.1 10 6.6 10H12.1Q13.8 10 13.8 8.3V5.2H16.2Q18.4 5.2 18.4 7.4V12Q18.4 14.2 16.2 14.2H9.2V14.9H13.8Z"/><circle cx="6.6" cy="2" r="0.8" fill="#f8f8f8"/><circle cx="11.8" cy="16.8" r="0.8" fill="#f8f8f8"/></svg><div class="t" style="left:1261.00px;top:85.00px;font-size:23.4px;color:#7b7b7b;letter-spacing:-0.357px;">vector_store.py</div><div class="r" style="left:1467px;top:63px;width:1px;height:62px;background:#e5e5e5;"></div><div class="r" style="left:1468px;top:63px;width:264px;height:63px;background:#ffffff;"></div><div class="r" style="left:1468px;top:63px;width:264px;height:2px;background:#005fb8;"></div><div class="r" style="left:1732px;top:63px;width:1px;height:62px;background:#e5e5e5;"></div><svg class="r" style="left:1494.5px;top:84.5px;" width="19.3" height="19.719565217391306" viewBox="-0.2 -0.2 18.8 19.2"><path fill="#4686b0" d="M4.6 2.2Q4.6 0 6.8 0H11.1Q13.3 0 13.3 2.2V7.3Q13.3 8.8 11.8 8.8H6.3Q4.6 8.8 4.6 10.5V13.6H2.2Q0 13.6 0 11.4V6.8Q0 4.6 2.2 4.6H9.2V3.9H4.6Z"/><path fill="#4686b0" stroke="#ffffff" stroke-width="0.7" d="M13.8 16.6Q13.8 18.8 11.6 18.8H7.3Q5.1 18.8 5.1 16.6V11.5Q5.1 10 6.6 10H12.1Q13.8 10 13.8 8.3V5.2H16.2Q18.4 5.2 18.4 7.4V12Q18.4 14.2 16.2 14.2H9.2V14.9H13.8Z"/><circle cx="6.6" cy="2" r="0.8" fill="#ffffff"/><circle cx="11.8" cy="16.8" r="0.8" fill="#ffffff"/></svg><div class="t" style="left:1527.00px;top:85.00px;font-size:23.4px;color:#333333;letter-spacing:-0.318px;">rag_pipeline.py</div><svg class="r" style="left:1694px;top:82px;" width="26" height="24" viewBox="1694 82 26 24"><path d="M1699.6 86.2L1715.6 101.4M1715.6 86.2L1699.6 101.4" stroke="#3b3b3b" stroke-width="1.9"/></svg><svg class="r" style="left:1746px;top:78px;" width="54" height="30" viewBox="1746 78 54 30"><path d="M1752.5 85.2Q1752.5 82.6 1754.8 83.8L1769.4 91.6Q1771.5 93 1769.4 94.4L1754.8 102.2Q1752.5 103.4 1752.5 100.8Z" fill="none" stroke="#3b3b3b" stroke-width="1.9" stroke-linejoin="round"/><path d="M1783.5 90.5L1789.5 96.5 1795.5 90.5" fill="none" stroke="#3b3b3b" stroke-width="1.7"/></svg><svg class="r" style="left:1814px;top:78px;" width="34" height="32" viewBox="1814 78 34 32"><rect x="1819" y="82" width="23.5" height="23" rx="3.5" fill="none" stroke="#3b3b3b" stroke-width="1.9"/><path d="M1830.7 82V105" stroke="#3b3b3b" stroke-width="1.9"/></svg><svg class="r" style="left:1864px;top:86px;" width="28" height="14" viewBox="1864 86 28 14"><circle cx="1870.5" cy="93" r="2.1" fill="#3b3b3b"/><circle cx="1877.8" cy="93" r="2.1" fill="#3b3b3b"/><circle cx="1885.1" cy="93" r="2.1" fill="#3b3b3b"/></svg><div class="t" style="left:422.50px;top:136.00px;font-size:23.4px;color:#616161;letter-spacing:0.263px;">my-rag-project</div><svg class="r" style="left:587px;top:134px;" width="16" height="24" viewBox="587 134 16 24"><path d="M589 137.5L597.5 145.6 589 153.7" fill="none" stroke="#616161" stroke-width="1.7"/></svg><svg class="r" style="left:614.5px;top:136.5px;" width="19.3" height="19.719565217391306" viewBox="-0.2 -0.2 18.8 19.2"><path fill="#4686b0" d="M4.6 2.2Q4.6 0 6.8 0H11.1Q13.3 0 13.3 2.2V7.3Q13.3 8.8 11.8 8.8H6.3Q4.6 8.8 4.6 10.5V13.6H2.2Q0 13.6 0 11.4V6.8Q0 4.6 2.2 4.6H9.2V3.9H4.6Z"/><path fill="#4686b0" stroke="#ffffff" stroke-width="0.7" d="M13.8 16.6Q13.8 18.8 11.6 18.8H7.3Q5.1 18.8 5.1 16.6V11.5Q5.1 10 6.6 10H12.1Q13.8 10 13.8 8.3V5.2H16.2Q18.4 5.2 18.4 7.4V12Q18.4 14.2 16.2 14.2H9.2V14.9H13.8Z"/><circle cx="6.6" cy="2" r="0.8" fill="#ffffff"/><circle cx="11.8" cy="16.8" r="0.8" fill="#ffffff"/></svg><div class="t" style="left:646.00px;top:136.00px;font-size:23.4px;color:#616161;letter-spacing:-0.268px;">rag_pipeline.py</div><svg class="r" style="left:809px;top:134px;" width="16" height="24" viewBox="809 134 16 24"><path d="M811.5 137.5L820.0 145.6 811.5 153.7" fill="none" stroke="#616161" stroke-width="1.7"/></svg><svg class="r" style="left:826px;top:128px;" width="36" height="34" viewBox="826 128 36 34"><path d="M832.6 142.4L840 135.2 843.9 139 836.5 146.3Z" fill="none" stroke="#d67e00" stroke-width="1.9" stroke-linejoin="round"/><path d="M841.6 142.6H850M845.8 142.6V152.4H850" fill="none" stroke="#d67e00" stroke-width="1.9"/><path d="M852.8 140.3L856.1 143.6 852.8 146.9 849.5 143.6Z" fill="none" stroke="#d67e00" stroke-width="1.8" stroke-linejoin="round"/><path d="M852.8 149.9L856.1 153.2 852.8 156.5 849.5 153.2Z" fill="none" stroke="#d67e00" stroke-width="1.8" stroke-linejoin="round"/></svg><div class="t" style="left:865.00px;top:136.00px;font-size:23.4px;color:#616161;letter-spacing:-1.062px;">GroqRAGSystem</div><svg class="r" style="left:1042px;top:134px;" width="16" height="24" viewBox="1042 134 16 24"><path d="M1044.5 137.5L1053.0 145.6 1044.5 153.7" fill="none" stroke="#616161" stroke-width="1.7"/></svg><svg class="r" style="left:1062px;top:130px;" width="32" height="32" viewBox="1062 130 32 32"><path d="M1077.8 134.3L1089.2 139.2V152L1077.8 156.8 1066.3 152V139.2Z" fill="none" stroke="#652d90" stroke-width="1.9" stroke-linejoin="round"/><path d="M1071 140.5L1077.8 143.3 1084.6 140.5M1077.8 143.3V151" fill="none" stroke="#652d90" stroke-width="1.9"/></svg><div class="t" style="left:1098.38px;top:136.00px;font-size:23.4px;color:#616161;letter-spacing:-0.295px;">_format_context</div><div class="r" style="left:515px;top:200px;width:2px;height:75px;background:#d3d3d3;"></div><div class="r" style="left:570px;top:200px;width:2px;height:75px;background:#d3d3d3;"></div><div class="t" style="left:441.40px;top:216.00px;font-size:22.5px;color:#6e7681;letter-spacing:-2.200px;font-family:'Liberation Mono',monospace;">36</div><div class="t" style="left:441.40px;top:250.00px;font-size:22.5px;color:#6e7681;letter-spacing:-2.200px;font-family:'Liberation Mono',monospace;">37</div><div class="t" style="left:627.00px;top:216.00px;font-size:22.5px;color:#001080;letter-spacing:0.350px;font-family:'Liberation Mono',monospace;-webkit-text-stroke:0.2px #001080;">context</div><div class="t" style="left:737.80px;top:216.00px;font-size:22.5px;color:#000000;letter-spacing:0.350px;font-family:'Liberation Mono',monospace;-webkit-text-stroke:0.2px #000000;">=</div><div class="t" style="left:765.50px;top:216.00px;font-size:22.5px;color:#001080;letter-spacing:0.350px;font-family:'Liberation Mono',monospace;-webkit-text-stroke:0.2px #001080;">self</div><div class="t" style="left:820.90px;top:216.00px;font-size:22.5px;color:#000000;letter-spacing:0.350px;font-family:'Liberation Mono',monospace;-webkit-text-stroke:0.2px #000000;">.</div><div class="t" style="left:834.75px;top:216.00px;font-size:22.5px;color:#795e26;letter-spacing:0.350px;font-family:'Liberation Mono',monospace;-webkit-text-stroke:0.2px #795e26;">_format_context</div><div class="t" style="left:1042.50px;top:216.00px;font-size:22.5px;color:#0431fa;letter-spacing:0.350px;font-family:'Liberation Mono',monospace;-webkit-text-stroke:0.2px #0431fa;">(</div><div class="t" style="left:1056.35px;top:216.00px;font-size:22.5px;color:#001080;letter-spacing:0.350px;font-family:'Liberation Mono',monospace;-webkit-text-stroke:0.2px #001080;">search_results</div><div class="t" style="left:1250.25px;top:216.00px;font-size:22.5px;color:#0431fa;letter-spacing:0.350px;font-family:'Liberation Mono',monospace;-webkit-text-stroke:0.2px #0431fa;">)</div><div class="r" style="left:392px;top:166px;width:1395px;height:34px;background:#ffffff;"></div><div class="r" style="left:392px;top:200px;width:1395px;height:7px;background:transparent;background:linear-gradient(#dcdcdc,rgba(255,255,255,0));"></div><div class="t" style="left:441.40px;top:174.00px;font-size:22.5px;color:#6e7681;letter-spacing:-2.200px;font-family:'Liberation Mono',monospace;">15</div><div class="t" style="left:515.00px;top:174.00px;font-size:22.5px;color:#0000ff;letter-spacing:0.350px;font-family:'Liberation Mono',monospace;-webkit-text-stroke:0.2px #0000ff;">class</div><div class="t" style="left:598.10px;top:174.00px;font-size:22.5px;color:#267f99;letter-spacing:0.350px;font-family:'Liberation Mono',monospace;-webkit-text-stroke:0.2px #267f99;">GroqRAGSystem</div><div class="t" style="left:778.15px;top:174.00px;font-size:22.5px;color:#000000;letter-spacing:0.350px;font-family:'Liberation Mono',monospace;-webkit-text-stroke:0.2px #000000;">:</div><div class="t" style="left:429.30px;top:299.00px;font-size:19.5px;color:#424242;letter-spacing:-1.460px;">DEBUG CONSOLE</div><div class="t" style="left:626.30px;top:299.00px;font-size:19.5px;color:#424242;letter-spacing:-1.032px;">TERMINAL</div><div class="r" style="left:622px;top:326.5px;width:99px;height:1.8px;background:#005fb8;"></div><div class="t" style="left:761.50px;top:299.00px;font-size:19.5px;color:#424242;letter-spacing:-1.839px;">PROBLEMS</div><div class="t" style="left:901.70px;top:299.00px;font-size:19.5px;color:#424242;letter-spacing:-2.694px;">PORTS</div><div class="t" style="left:1002.00px;top:299.00px;font-size:19.5px;color:#424242;letter-spacing:-0.989px;">POSTMAN CONSOLE</div><div class="t" style="left:1229.00px;top:299.00px;font-size:19.5px;color:#424242;letter-spacing:-1.425px;">OUTPUT</div><svg class="r" style="left:1358px;top:289px;" width="36" height="34" viewBox="1358 289 36 34"><path d="M1376.1 297H1365.0Q1362.5 297 1362.5 299.5V310.8Q1362.5 313.3 1365.0 313.3H1368.3V318L1374.9 313.3H1383.5Q1386.0 313.3 1386.0 310.8V309" fill="none" stroke="#3b3b3b" stroke-width="1.8" stroke-linejoin="round"/><path d="M1382.7 292.5Q1383.3300000000002 296.37 1387.2 297Q1383.3300000000002 297.63 1382.7 301.5Q1382.07 297.63 1378.2 297Q1382.07 296.37 1382.7 292.5Z" fill="#3b3b3b"/><path d="M1387.0 299.7Q1387.49 302.71 1390.5 303.2Q1387.49 303.69 1387.0 306.7Q1386.51 303.69 1383.5 303.2Q1386.51 302.71 1387.0 299.7Z" fill="#3b3b3b"/></svg><div class="t" style="left:1399.00px;top:300.00px;font-size:20.5px;color:#424242;letter-spacing:0.006px;">python - my-rag-project</div><svg class="r" style="left:1626px;top:288px;" width="58" height="34" viewBox="1626 288 58 34"><path d="M1643 293.5V317M1631.3 305.2H1654.7" stroke="#3b3b3b" stroke-width="1.9"/><path d="M1666.3 302.3L1672.5 308.5 1678.7 302.3" fill="none" stroke="#3b3b3b" stroke-width="1.7"/></svg><svg class="r" style="left:1697px;top:290px;" width="34" height="32" viewBox="1697 290 34 32"><rect x="1702" y="294.7" width="23.7" height="23" rx="3.5" fill="none" stroke="#3b3b3b" stroke-width="1.9"/><path d="M1713.8 294.7V317.7" stroke="#3b3b3b" stroke-width="1.9"/></svg><svg class="r" style="left:1747px;top:300px;" width="28" height="14" viewBox="1747 300 28 14"><circle cx="1753.5" cy="306.7" r="2.1" fill="#3b3b3b"/><circle cx="1760.9" cy="306.7" r="2.1" fill="#3b3b3b"/><circle cx="1768.3" cy="306.7" r="2.1" fill="#3b3b3b"/></svg><div class="r" style="left:1795px;top:293px;width:1px;height:29px;background:#d4d4d4;"></div><svg class="r" style="left:1816px;top:292px;" width="30" height="30" viewBox="1816 292 30 30"><path d="M1821 302.5V299A2.5 2.5 0 0 1 1823.5 296.5H1827M1835 296.5H1838.5A2.5 2.5 0 0 1 1841 299V302.5M1841 310.5V314A2.5 2.5 0 0 1 1838.5 316.5H1835M1827 316.5H1823.5A2.5 2.5 0 0 1 1821 314V310.5" fill="none" stroke="#3b3b3b" stroke-width="1.9"/></svg><svg class="r" style="left:1864px;top:293px;" width="28" height="28" viewBox="1864 293 28 28"><path d="M1869.8 298.5L1885.8 314.5M1885.8 298.5L1869.8 314.5" stroke="#3b3b3b" stroke-width="1.8"/></svg><div class="t" style="left:428.60px;top:357.00px;font-size:22px;color:#333333;letter-spacing:-0.200px;font-family:'Liberation Mono',monospace;-webkit-text-stroke:0.25px #333333;">(rag_env) D:\my-rag-project&gt;python rag_pipeline.py</div><div class="t" style="left:467.60px;top:388.00px;font-size:22px;color:#333333;letter-spacing:-0.200px;font-family:'Liberation Mono',monospace;-webkit-text-stroke:0.25px #333333;">Initializing Groq RAG System...</div><div class="t" style="left:467.60px;top:419.00px;font-size:22px;color:#333333;letter-spacing:-0.200px;font-family:'Liberation Mono',monospace;-webkit-text-stroke:0.25px #333333;">Using FREE Groq API with Llama 3 (super fast!)</div><div class="t" style="left:467.60px;top:450.00px;font-size:22px;color:#333333;letter-spacing:-0.200px;font-family:'Liberation Mono',monospace;-webkit-text-stroke:0.25px #333333;">Groq RAG System Ready! Ask questions about the publications.</div><div class="t" style="left:428.60px;top:481.00px;font-size:22px;color:#333333;letter-spacing:-0.200px;font-family:'Liberation Mono',monospace;-webkit-text-stroke:0.25px #333333;">Type &#x27;quit&#x27; to exit.</div><div class="t" style="left:467.60px;top:542.00px;font-size:22px;color:#333333;letter-spacing:-0.200px;font-family:'Liberation Mono',monospace;-webkit-text-stroke:0.25px #333333;">Try these questions:</div><div class="t" style="left:454.60px;top:573.00px;font-size:22px;color:#333333;letter-spacing:-0.200px;font-family:'Liberation Mono',monospace;-webkit-text-stroke:0.25px #333333;">- How can I add memory to RAG applications?</div><div class="t" style="left:454.60px;top:604.00px;font-size:22px;color:#333333;letter-spacing:-0.200px;font-family:'Liberation Mono',monospace;-webkit-text-stroke:0.25px #333333;">- What are auto-encoders used for?</div><div class="t" style="left:454.60px;top:635.00px;font-size:22px;color:#333333;letter-spacing:-0.200px;font-family:'Liberation Mono',monospace;-webkit-text-stroke:0.25px #333333;">- Tell me about time series forecasting</div><div class="t" style="left:467.60px;top:697.00px;font-size:22px;color:#333333;letter-spacing:-0.200px;font-family:'Liberation Mono',monospace;-webkit-text-stroke:0.25px #333333;">Your question:</div><div class="r" style="left:662px;top:689px;width:12.8px;height:31px;background:#005fb8;"></div><svg class="r" style="left:428px;top:378px;" width="34" height="34" viewBox="428 378 34 34"><g transform="translate(428 378)">
<path d="M5.2 19Q7.5 15.3 11 15.6L11.8 19.5Z" fill="#ee3f7c"/>
<path d="M14.8 29.2Q18.6 27 18.8 23.5L14.8 23.2Z" fill="#ee3f7c"/>
<path d="M10.8 23.2Q6.5 23 5.2 29.3Q11.5 28.3 11.5 24.2Z" fill="#f28c2c"/>
<path d="M9.8 22.8Q11.5 13.5 20 7.3Q24.5 4.3 29.8 4.6Q30.2 10 27 14.5Q21.5 22 12 25Z" fill="#dccfe6"/>
<path d="M9.8 22.8Q11.5 13.5 20 7.3L23.5 10.8Q17 18 12 25Z" fill="#c4bac6" opacity="0.7"/>
<path d="M23 6.2Q26.5 4.4 29.8 4.6Q30.2 8 28.6 11.2Z" fill="#f03a55"/>
<circle cx="21.6" cy="12.8" r="2.5" fill="#5bb0ff" stroke="#606090" stroke-width="0.7"/>
<path d="M8.8 21.2L15.6 17.6Q17 19 16.6 20.6L12.4 26.2Q9.8 24.5 8.8 21.2Z" fill="#f24b86"/>
<path d="M8.4 22.6L12.6 26.8" stroke="#4a3a80" stroke-width="0.9"/>
</g></svg><svg class="r" style="left:428px;top:409px;" width="34" height="34" viewBox="428 409 34 34"><g transform="translate(428 409)">
<defs><linearGradient id="bg428409" x1="0" y1="0.3" x2="1" y2="0.6"><stop offset="0" stop-color="#ffb02e"/><stop offset="1" stop-color="#ffe27a"/></linearGradient></defs><path d="M17 4.3A8 8 0 0 1 25 12.3Q25 15.8 22 18.7Q20.5 20.2 20.3 23.2H13.7Q13.5 20.2 12 18.7Q9 15.8 9 12.3A8 8 0 0 1 17 4.3Z" fill="url(#bg428409)"/>
<path d="M14.8 22.5V17Q13.8 15.5 14.6 13.5Q17 11.5 19.4 13.5Q20.2 15.5 19.2 17V22.5" fill="none" stroke="#f3a33a" stroke-width="0.9"/>
<ellipse cx="20" cy="7.5" rx="2.3" ry="1.6" fill="#fff6d8" transform="rotate(35 20 7.5)"/>
<rect x="13.5" y="23" width="7" height="6" rx="1.5" fill="#a08fc6"/>
<path d="M13.3 25H20.7M13.3 27.2H20.7" stroke="#b8a9d6" stroke-width="0.8"/>
</g></svg><svg class="r" style="left:428px;top:440px;" width="34" height="34" viewBox="428 440 34 34"><g transform="translate(428 440)">
<rect x="5" y="4.5" width="25" height="25.2" rx="3.2" fill="#53cf88"/>
<path d="M10 17.5L15 22 25.6 11.5" fill="none" stroke="#ffffff" stroke-width="2.2" stroke-linecap="round" stroke-linejoin="round"/>
</g></svg><svg class="r" style="left:428px;top:533.5px;" width="34" height="34" viewBox="428 533.5 34 34"><g transform="translate(428 533.5)">
<defs><linearGradient id="bg428533" x1="0" y1="0.3" x2="1" y2="0.6"><stop offset="0" stop-color="#ffb02e"/><stop offset="1" stop-color="#ffe27a"/></linearGradient></defs><path d="M17 4.3A8 8 0 0 1 25 12.3Q25 15.8 22 18.7Q20.5 20.2 20.3 23.2H13.7Q13.5 20.2 12 18.7Q9 15.8 9 12.3A8 8 0 0 1 17 4.3Z" fill="url(#bg428533)"/>
<path d="M14.8 22.5V17Q13.8 15.5 14.6 13.5Q17 11.5 19.4 13.5Q20.2 15.5 19.2 17V22.5" fill="none" stroke="#f3a33a" stroke-width="0.9"/>
<ellipse cx="20" cy="7.5" rx="2.3" ry="1.6" fill="#fff6d8" transform="rotate(35 20 7.5)"/>
<rect x="13.5" y="23" width="7" height="6" rx="1.5" fill="#a08fc6"/>
<path d="M13.3 25H20.7M13.3 27.2H20.7" stroke="#b8a9d6" stroke-width="0.8"/>
</g></svg><svg class="r" style="left:428px;top:688px;" width="34" height="34" viewBox="428 688 34 34"><g transform="translate(428 688)">
<defs><linearGradient id="fg" x1="0.2" y1="1" x2="0.8" y2="0"><stop offset="0" stop-color="#f47a3a"/><stop offset="0.5" stop-color="#fbae3c"/><stop offset="1" stop-color="#fdd24a"/></linearGradient></defs><circle cx="17.3" cy="16.8" r="12.4" fill="url(#fg)"/>
<circle cx="12" cy="13" r="3.6" fill="#ffffff"/><circle cx="21.8" cy="13.4" r="3.6" fill="#ffffff"/>
<circle cx="12" cy="13.3" r="1.7" fill="#3b2a33"/><circle cx="21.6" cy="13.6" r="1.7" fill="#3b2a33"/>
<path d="M9.2 6.3Q11 5.7 13.5 6.5M19.3 9.6Q22 8.6 24.5 10" fill="none" stroke="#3b2a33" stroke-width="1"/>
<path d="M14.3 21.2Q17 18 20.4 21.2" fill="none" stroke="#3b2a33" stroke-width="1.6" stroke-linecap="round"/>
<path d="M6.5 22Q8.5 18.5 10.5 19.5Q11.8 21.5 12.5 22.8H17.5Q18.3 23.8 17 24.5L15.8 25.3Q16.3 27 15 27.5Q14.7 29.8 12.5 30H9Q6.2 29.5 6.3 26Z" fill="#ffc83d"/>
</g></svg><div class="r" style="left:1836px;top:338px;width:1px;height:631px;background:#e5e5e5;"></div><div class="r" style="left:1811px;top:349px;width:1px;height:620px;background:#e5e5e5;"></div><div class="r" style="left:1811px;top:349px;width:25px;height:1px;background:#e5e5e5;"></div><div class="r" style="left:1812px;top:932px;width:24px;height:36px;background:#bfbfbf;"></div><svg class="r" style="left:1860px;top:340px;" width="36" height="36" viewBox="1860 340 36 36"><rect x="1866.6" y="345.7" width="23.1" height="23.1" rx="4" fill="none" stroke="#3b3b3b" stroke-width="2"/><path d="M1869.6 352.3L1875.2 358.5 1869.6 364.3M1876.5 363.9H1886.8" fill="none" stroke="#3b3b3b" stroke-width="2"/></svg><svg class="r" style="left:1860px;top:381px;" width="36" height="30" viewBox="1860 381 36 30"><path d="M1877.9 385.7Q1878.8 385.7 1879.4 386.7L1889.6 405.2Q1890.2 406.8 1888.6 406.8H1867.2Q1865.6 406.8 1866.2 405.2L1876.4 386.7Q1877 385.7 1877.9 385.7Z" fill="none" stroke="#8f6b0a" stroke-width="1.9" stroke-linejoin="round"/><path d="M1877.9 392.9V399.3" stroke="#8f6b0a" stroke-width="2"/><circle cx="1877.9" cy="403.3" r="1.2" fill="#8f6b0a"/></svg><svg class="r" style="left:1860px;top:420px;" width="36" height="30" viewBox="1860 420 36 30"><path d="M1877.9 424.7Q1878.8 424.7 1879.4 425.7L1889.6 444.2Q1890.2 445.8 1888.6 445.8H1867.2Q1865.6 445.8 1866.2 444.2L1876.4 425.7Q1877 424.7 1877.9 424.7Z" fill="none" stroke="#8f6b0a" stroke-width="1.9" stroke-linejoin="round"/><path d="M1877.9 431.9V438.3" stroke="#8f6b0a" stroke-width="2"/><circle cx="1877.9" cy="442.3" r="1.2" fill="#8f6b0a"/></svg><div class="r" style="left:1837px;top:496px;width:82px;height:40px;background:#e4e6f1;"></div><div class="r" style="left:1837px;top:496px;width:2px;height:40px;background:#005fb8;"></div><svg class="r" style="left:1860px;top:458px;" width="36" height="34" viewBox="1860 458 36 34"><path d="M1877.8 466.4H1866.7Q1864.2 466.4 1864.2 468.9V480.2Q1864.2 482.7 1866.7 482.7H1870.0V487.4L1876.6000000000001 482.7H1885.2Q1887.7 482.7 1887.7 480.2V478.4" fill="none" stroke="#3b3b3b" stroke-width="1.8" stroke-linejoin="round"/><path d="M1884.4 461.9Q1885.0300000000002 465.77 1888.9 466.4Q1885.0300000000002 467.03 1884.4 470.9Q1883.77 467.03 1879.9 466.4Q1883.77 465.77 1884.4 461.9Z" fill="#3b3b3b"/><path d="M1888.7 469.09999999999997Q1889.19 472.10999999999996 1892.2 472.59999999999997Q1889.19 473.09 1888.7 476.09999999999997Q1888.21 473.09 1885.2 472.59999999999997Q1888.21 472.10999999999996 1888.7 469.09999999999997Z" fill="#3b3b3b"/></svg><svg class="r" style="left:1860px;top:498px;" width="36" height="34" viewBox="1860 498 36 34"><path d="M1877.8 506.7H1866.7Q1864.2 506.7 1864.2 509.2V520.5Q1864.2 523.0 1866.7 523.0H1870.0V527.7L1876.6000000000001 523.0H1885.2Q1887.7 523.0 1887.7 520.5V518.7" fill="none" stroke="#3b3b3b" stroke-width="1.8" stroke-linejoin="round"/><path d="M1884.4 502.2Q1885.0300000000002 506.07 1888.9 506.7Q1885.0300000000002 507.33 1884.4 511.2Q1883.77 507.33 1879.9 506.7Q1883.77 506.07 1884.4 502.2Z" fill="#3b3b3b"/><path d="M1888.7 509.4Q1889.19 512.41 1892.2 512.9Q1889.19 513.39 1888.7 516.4Q1888.21 513.39 1885.2 512.9Q1888.21 512.41 1888.7 509.4Z" fill="#3b3b3b"/></svg><div class="r" style="left:1787px;top:166px;width:108px;height:109px;background:#ffffff;"></div><svg class="r" style="left:1787px;top:160px;" width="110" height="120" viewBox="1787 160 110 120"><rect x="1806.64" y="166.02" width="6.82" height="1.3" fill="#2a3a9a" opacity="0.55"/><rect x="1802.92" y="170.10" width="14.25" height="1.3" fill="#2a3a9a" opacity="0.55"/><rect x="1817.17" y="170.10" width="18.59" height="1.3" fill="#3a90a8" opacity="0.55"/><rect x="1802.92" y="171.96" width="14.25" height="1.3" fill="#2a3a9a" opacity="0.55"/><rect x="1817.17" y="171.96" width="14.87" height="1.3" fill="#3a90a8" opacity="0.55"/><rect x="1832.04" y="171.96" width="8.67" height="1.3" fill="#8a6e36" opacity="0.55"/><rect x="1840.72" y="171.96" width="14.87" height="1.3" fill="#a82a2a" opacity="0.55"/><rect x="1802.92" y="173.82" width="10.53" height="1.3" fill="#2a3a9a" opacity="0.55"/><rect x="1813.46" y="173.82" width="19.83" height="1.3" fill="#a82a2a" opacity="0.55"/><rect x="1833.28" y="173.82" width="18.59" height="1.3" fill="#2a902a" opacity="0.55"/><rect x="1798.59" y="178.04" width="3.72" height="1.3" fill="#3050f0" opacity="0.55"/><rect x="1802.92" y="178.04" width="8.05" height="1.3" fill="#8a6e36" opacity="0.55"/><rect x="1810.98" y="178.04" width="38.41" height="1.3" fill="#2a3a9a" opacity="0.55"/><rect x="1802.92" y="180.02" width="41.51" height="1.3" fill="#a82a2a" opacity="0.55"/><rect x="1802.92" y="183.98" width="34.08" height="1.3" fill="#2a902a" opacity="0.55"/><rect x="1802.92" y="185.84" width="8.05" height="1.3" fill="#8a6e36" opacity="0.55"/><rect x="1810.98" y="185.84" width="38.41" height="1.3" fill="#a82a2a" opacity="0.55"/><rect x="1802.92" y="187.95" width="37.79" height="1.3" fill="#2a3a9a" opacity="0.55"/><rect x="1840.72" y="187.95" width="4.96" height="1.3" fill="#8a6e36" opacity="0.55"/><rect x="1845.68" y="187.95" width="29.12" height="1.3" fill="#2a3a9a" opacity="0.55"/><rect x="1802.92" y="192.04" width="39.03" height="1.3" fill="#2a902a" opacity="0.55"/><rect x="1802.92" y="193.90" width="17.97" height="1.3" fill="#2a3a9a" opacity="0.55"/><rect x="1820.89" y="193.90" width="11.15" height="1.3" fill="#8a6e36" opacity="0.55"/><rect x="1832.04" y="193.90" width="16.73" height="1.3" fill="#2a3a9a" opacity="0.55"/><rect x="1802.92" y="197.99" width="40.27" height="1.3" fill="#2a902a" opacity="0.55"/><rect x="1802.92" y="199.84" width="17.97" height="1.3" fill="#2a3a9a" opacity="0.55"/><rect x="1820.89" y="199.84" width="12.39" height="1.3" fill="#8a6e36" opacity="0.55"/><rect x="1833.28" y="199.84" width="16.73" height="1.3" fill="#2a3a9a" opacity="0.55"/><rect x="1802.92" y="203.81" width="40.89" height="1.3" fill="#2a902a" opacity="0.55"/><rect x="1802.92" y="205.92" width="8.05" height="1.3" fill="#8a6e36" opacity="0.55"/><rect x="1810.98" y="205.92" width="33.46" height="1.3" fill="#a82a2a" opacity="0.55"/><rect x="1802.92" y="207.90" width="19.21" height="1.3" fill="#2a3a9a" opacity="0.55"/><rect x="1822.13" y="207.90" width="12.39" height="1.3" fill="#8a6e36" opacity="0.55"/><rect x="1834.52" y="207.90" width="10.53" height="1.3" fill="#2a3a9a" opacity="0.55"/><rect x="1802.92" y="211.86" width="6.20" height="1.3" fill="#b040d8" opacity="0.55"/><rect x="1809.74" y="211.86" width="24.16" height="1.3" fill="#2a3a9a" opacity="0.55"/><rect x="1798.59" y="215.95" width="3.72" height="1.3" fill="#3050f0" opacity="0.55"/><rect x="1802.92" y="215.95" width="17.97" height="1.3" fill="#8a6e36" opacity="0.55"/><rect x="1820.89" y="215.95" width="18.59" height="1.3" fill="#2a3a9a" opacity="0.55"/><rect x="1839.48" y="215.95" width="14.25" height="1.3" fill="#3a90a8" opacity="0.55"/><rect x="1802.92" y="217.81" width="47.09" height="1.3" fill="#a82a2a" opacity="0.55"/><rect x="1802.92" y="219.92" width="17.97" height="1.3" fill="#2a3a9a" opacity="0.55"/><rect x="1802.92" y="223.88" width="3.10" height="1.3" fill="#b040d8" opacity="0.55"/><rect x="1806.64" y="223.88" width="14.25" height="1.3" fill="#2a3a9a" opacity="0.55"/><rect x="1820.89" y="223.88" width="24.78" height="1.3" fill="#3a90a8" opacity="0.55"/><rect x="1806.64" y="225.74" width="10.53" height="1.3" fill="#2a3a9a" opacity="0.55"/><rect x="1817.17" y="225.74" width="24.78" height="1.3" fill="#a82a2a" opacity="0.55"/><rect x="1806.64" y="227.73" width="10.53" height="1.3" fill="#2a3a9a" opacity="0.55"/><rect x="1817.17" y="227.73" width="30.98" height="1.3" fill="#a82a2a" opacity="0.55"/><rect x="1806.64" y="229.83" width="10.53" height="1.3" fill="#2a3a9a" opacity="0.55"/><rect x="1817.17" y="229.83" width="16.73" height="1.3" fill="#a82a2a" opacity="0.55"/><rect x="1806.64" y="231.94" width="10.53" height="1.3" fill="#2a3a9a" opacity="0.55"/><rect x="1817.17" y="231.94" width="19.21" height="1.3" fill="#a82a2a" opacity="0.55"/><rect x="1806.64" y="236.03" width="14.25" height="1.3" fill="#2a3a9a" opacity="0.55"/><rect x="1820.89" y="236.03" width="6.82" height="1.3" fill="#8a6e36" opacity="0.55"/><rect x="1810.98" y="237.89" width="28.50" height="1.3" fill="#a82a2a" opacity="0.55"/><rect x="1839.48" y="237.89" width="14.87" height="1.3" fill="#3050f0" opacity="0.55"/><rect x="1854.35" y="237.89" width="6.82" height="1.3" fill="#a82a2a" opacity="0.55"/><rect x="1810.98" y="239.75" width="16.73" height="1.3" fill="#a82a2a" opacity="0.55"/><rect x="1810.98" y="241.85" width="22.92" height="1.3" fill="#a82a2a" opacity="0.55"/><rect x="1810.98" y="243.83" width="22.92" height="1.3" fill="#a82a2a" opacity="0.55"/><rect x="1810.98" y="245.94" width="11.15" height="1.3" fill="#2a902a" opacity="0.55"/><rect x="1806.64" y="248.05" width="1.24" height="1.3" fill="#2a3a9a" opacity="0.55"/><rect x="1802.92" y="251.89" width="6.20" height="1.3" fill="#b040d8" opacity="0.55"/><rect x="1809.74" y="251.89" width="7.43" height="1.3" fill="#a82a2a" opacity="0.55"/><rect x="1817.17" y="251.89" width="16.73" height="1.3" fill="#2a3a9a" opacity="0.55"/><rect x="1798.59" y="255.85" width="3.72" height="1.3" fill="#3050f0" opacity="0.55"/><rect x="1802.92" y="255.85" width="17.97" height="1.3" fill="#8a6e36" opacity="0.55"/><rect x="1820.89" y="255.85" width="13.63" height="1.3" fill="#2a3a9a" opacity="0.55"/><rect x="1834.52" y="255.85" width="25.40" height="1.3" fill="#3a90a8" opacity="0.55"/><rect x="1802.92" y="257.96" width="40.27" height="1.3" fill="#a82a2a" opacity="0.55"/><rect x="1802.92" y="262.05" width="8.05" height="1.3" fill="#2a3a9a" opacity="0.55"/><rect x="1810.98" y="262.05" width="82.40" height="1.3" fill="#a82a2a" opacity="0.55"/><rect x="1794.87" y="266.02" width="98.51" height="1.3" fill="#a82a2a" opacity="0.55"/><rect x="1794.87" y="269.86" width="7.43" height="1.3" fill="#a82a2a" opacity="0.55"/><rect x="1794.87" y="271.96" width="9.29" height="1.3" fill="#2a3a9a" opacity="0.55"/></svg><div class="r" style="left:1893px;top:166px;width:1px;height:40px;background:#eeeeee;"></div><div class="r" style="left:1895px;top:198.5px;width:24px;height:3px;background:#505050;"></div>
</body></html>
